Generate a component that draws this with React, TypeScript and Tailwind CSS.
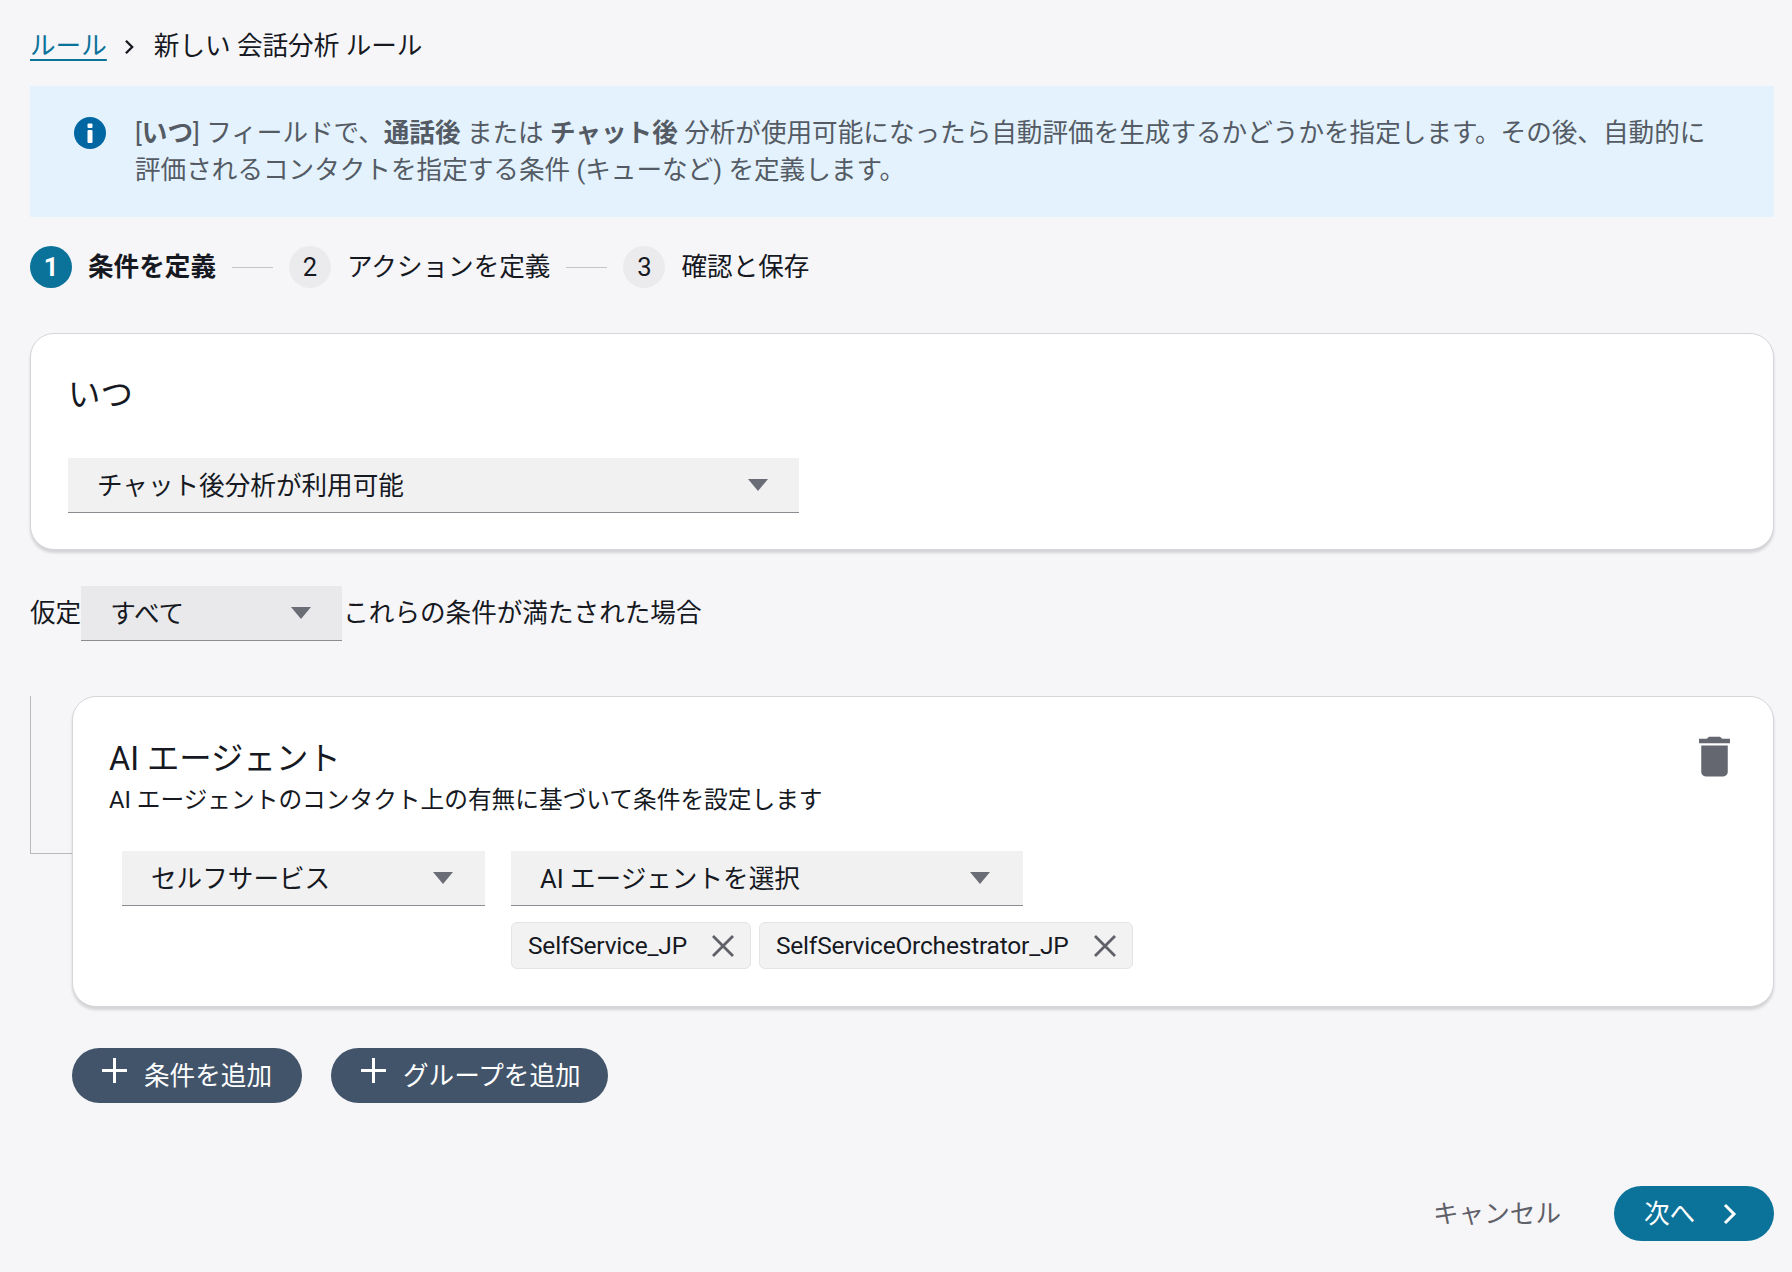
const font = 'font-["Roboto","Noto_Sans_CJK_JP",sans-serif]';

function Caret() {
  return (
    <svg viewBox="0 0 20 12" className="w-5 h-3 shrink-0" fill="#6b6d76">
      <path d="M0 0h20L10 12z" />
    </svg>
  );
}

function Select({ label, className }: { label: string; className: string }) {
  return (
    <div className={`flex h-[55px] items-center justify-between border-b border-[#8b8c91] pl-[29px] ${className}`}>
      <span className="pt-[2px] text-[25.6px] leading-[37px] text-[#16191f]">{label}</span>
      <Caret />
    </div>
  );
}

function Chip({ label }: { label: string }) {
  return (
    <div className="flex h-[47px] items-center rounded-[6px] border border-[#e4e4e6] bg-[#f2f2f3] pl-4 pr-[15px]">
      <span className="pt-[2px] text-[24.5px] leading-none tracking-[-0.2px] text-[#16191f]">{label}</span>
      <svg viewBox="0 0 24 24" className="ml-[24px] h-[24px] w-[24px]" stroke="#5f6068" strokeWidth="2.8">
        <path d="M2 2l20 20M22 2L2 22" />
      </svg>
    </div>
  );
}

function AddButton({ label, className }: { label: string; className: string }) {
  return (
    <button className={`flex h-[55px] items-center rounded-[28px] bg-[#425469] pl-[30px] text-white ${className}`}>
      <svg viewBox="0 0 25 25" className="mb-[10px] h-[25px] w-[25px] shrink-0" fill="#fff">
        <path d="M11 0h3v11h11v3H14v11h-3V14H0v-3h11z" />
      </svg>
      <span className="ml-[17px] pt-[2px] text-[25.6px] leading-none">{label}</span>
    </button>
  );
}

function Step({ n, label, active }: { n: number; label: string; active?: boolean }) {
  return (
    <div className="flex items-center gap-4">
      <div
        className={`flex h-[42px] w-[42px] items-center justify-center rounded-full text-[25.6px] ${
          active ? "bg-[#0b7299] font-bold text-white" : "bg-[#ebebed] text-[#16191f]"
        }`}
      >
        {n}
      </div>
      <span className={`text-[25.6px] leading-[37px] text-[#16191f] ${active ? "font-bold" : ""}`}>{label}</span>
    </div>
  );
}

function StepLine() {
  return <div className="mx-[16px] h-px w-[41px] bg-[#c4c5c9]" />;
}

export default function App() {
  return (
    <div className={`min-h-screen bg-[#f6f6f9] pb-[31px] pl-[30px] pr-[18px] pt-[28px] ${font}`}>
      <nav className="flex h-[37px] items-center text-[25.6px] text-[#16191f]">
        <span className="text-[#0b7299] underline decoration-2 underline-offset-4">ルール</span>
        <svg viewBox="0 0 12 18" className="ml-[17px] mr-[19px] h-[16px] w-[11px]" fill="none" stroke="#16191f" strokeWidth="2.6">
          <path d="M2 2l7 7-7 7" />
        </svg>
        <span>新しい 会話分析 ルール</span>
      </nav>

      <div className="mt-[21px] flex h-[131px] items-center bg-[#e3f2fd] pl-[44px] pr-[60px]">
        <svg viewBox="0 0 32 32" className="mb-[37px] h-[32px] w-[32px] shrink-0">
          <circle cx="16" cy="16" r="16" fill="#0067a3" />
          <rect x="13.5" y="6.5" width="5" height="4.6" rx="1" fill="#fff" />
          <rect x="13.5" y="13" width="5" height="13" rx="1" fill="#fff" />
        </svg>
        <p className="ml-[29px] text-[25.6px] leading-[37px] text-[#545b64]">
          [<b className="font-bold">いつ</b>] フィールドで、<b className="font-bold">通話後</b> または{" "}
          <b className="font-bold">チャット後</b> 分析が使用可能になったら自動評価を生成するかどうかを指定します。その後、自動的に評価されるコンタクトを指定する条件 (キューなど) を定義します。
        </p>
      </div>

      <div className="mt-[29px] flex items-center">
        <Step n={1} label="条件を定義" active />
        <StepLine />
        <Step n={2} label="アクションを定義" />
        <StepLine />
        <Step n={3} label="確認と保存" />
      </div>

      <section className="mt-[45px] h-[217px] rounded-[24px] border border-[#d5d6d9] bg-white pl-[37px] pt-[38px] shadow-[0_3px_3px_rgba(0,0,0,0.14)]">
        <h2 className="text-[32.4px] font-normal leading-[46px] text-[#16191f]">いつ</h2>
        <Select label="チャット後分析が利用可能" className="mt-[40px] w-[731px] bg-[#f1f1f2] pr-[31px]" />
      </section>

      <div className="mt-[36px] flex items-center text-[25.6px] text-[#16191f]">
        <span>仮定</span>
        <Select label="すべて" className="w-[261px] bg-[#e9e9eb] pr-[31px]" />
        <span className="ml-[1px]">これらの条件が満たされた場合</span>
      </div>

      <div className="mt-[55px] flex items-start">
        <div className="h-[158px] w-[42px] shrink-0 border-b border-l border-[#b9babe]" />
        <section className="h-[311px] flex-1 rounded-[24px] border border-[#d5d6d9] bg-white pl-[36px] pr-[32px] pt-[40px] shadow-[0_3px_3px_rgba(0,0,0,0.14)]">
          <div className="flex items-start justify-between">
            <div>
              <h2 className="text-[32.4px] font-normal leading-[44px] text-[#16191f]">AI エージェント</h2>
              <p className="mt-[2px] text-[23.7px] leading-[34px] text-[#16191f]">AI エージェントのコンタクト上の有無に基づいて条件を設定します</p>
            </div>
            <svg viewBox="0 0 24 24" className="-mt-[7px] h-[53px] w-[53px]" fill="#646670">
              <path d="M6 19c0 1.1.9 2 2 2h8c1.1 0 2-.9 2-2V7H6v12zM19 4h-3.5l-1-1h-5l-1 1H5v2h14V4z" />
            </svg>
          </div>
          <div className="ml-[13px] mt-[34px] flex items-start gap-[26px]">
            <Select label="セルフサービス" className="w-[363px] bg-[#f1f1f2] pr-[32px]" />
            <div>
              <Select label="AI エージェントを選択" className="w-[512px] bg-[#f1f1f2] pr-[33px]" />
              <div className="mt-[16px] flex gap-2">
                <Chip label="SelfService_JP" />
                <Chip label="SelfServiceOrchestrator_JP" />
              </div>
            </div>
          </div>
        </section>
      </div>

      <div className="ml-[42px] mt-[41px] flex gap-[29px]">
        <AddButton label="条件を追加" className="w-[230px]" />
        <AddButton label="グループを追加" className="w-[277px]" />
      </div>

      <div className="mt-[83px] flex items-center justify-end">
        <span className="pt-[2px] text-[25.6px] text-[#5f6068]">キャンセル</span>
        <button className="ml-[53px] flex h-[55px] w-[160px] items-center rounded-[28px] bg-[#0b7299] pl-[30px] text-white">
          <span className="pt-[2px] text-[25.6px] leading-none">次へ</span>
          <svg viewBox="0 0 14 22" className="ml-[28px] h-[22px] w-[14px]" fill="none" stroke="#fff" strokeWidth="3">
            <path d="M2 2l9 9-9 9" />
          </svg>
        </button>
      </div>
    </div>
  );
}
